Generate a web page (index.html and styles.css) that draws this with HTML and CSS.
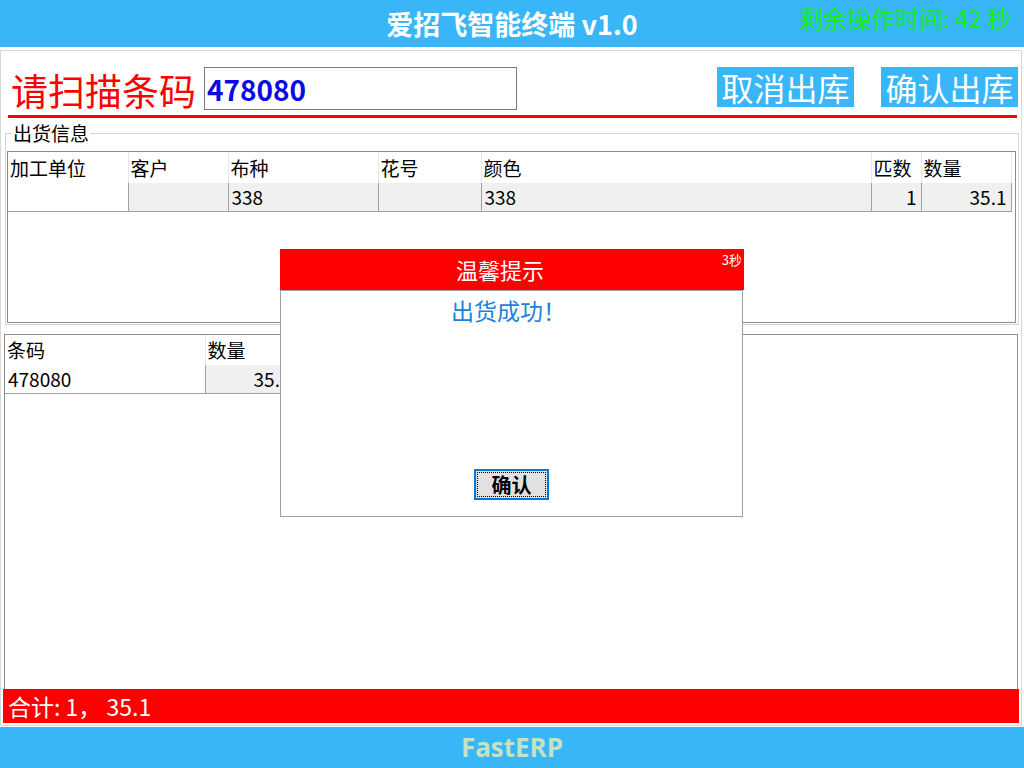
FILE: index.html
```html
<!DOCTYPE html>
<html lang="zh">
<head>
    <meta charset="UTF-8">
    <title>爱招飞智能终端 v1.0</title>
    <link rel="stylesheet" href="styles.css">
</head>
<body>
    <div class="topbar">
        <div></div>
        <div class="topbar-title">爱招飞智能终端 v1.0</div>
        <div class="topbar-timer">剩余操作时间: 42 秒</div>
    </div>

    <div class="main">
        <div class="panel">
            <div class="scan-row">
                <label class="scan-label" for="barcode">请扫描条码</label>
                <input class="scan-input" id="barcode" type="text" value="478080">
                <div class="scan-actions">
                    <button class="action-btn">取消出库</button>
                    <button class="action-btn">确认出库</button>
                </div>
            </div>
            <div class="scan-line"></div>

            <fieldset class="ship-info">
                <legend>出货信息</legend>
                <div class="grid-box grid-box-info">
                    <table class="grid">
                        <colgroup>
                            <col style="width:120px">
                            <col style="width:100px">
                            <col style="width:150px">
                            <col style="width:103px">
                            <col style="width:390px">
                            <col style="width:50px">
                            <col style="width:90px">
                        </colgroup>
                        <thead>
                            <tr>
                                <th>加工单位</th>
                                <th>客户</th>
                                <th>布种</th>
                                <th>花号</th>
                                <th>颜色</th>
                                <th>匹数</th>
                                <th>数量</th>
                            </tr>
                        </thead>
                        <tbody>
                            <tr>
                                <td class="row-head"></td>
                                <td></td>
                                <td>338</td>
                                <td></td>
                                <td>338</td>
                                <td class="num">1</td>
                                <td class="num">35.1</td>
                            </tr>
                        </tbody>
                    </table>
                </div>
            </fieldset>

            <div class="grid-box grid-box-list">
                <table class="grid">
                    <colgroup>
                        <col style="width:200px">
                        <col style="width:90px">
                    </colgroup>
                    <thead>
                        <tr>
                            <th>条码</th>
                            <th>数量</th>
                        </tr>
                    </thead>
                    <tbody>
                        <tr>
                            <td class="row-head">478080</td>
                            <td class="num">35.1</td>
                        </tr>
                    </tbody>
                </table>
            </div>

            <div class="total-bar">合计: 1， 35.1</div>
        </div>
    </div>

    <div class="footer">FastERP</div>

    <div class="dialog">
        <div class="dialog-head">
            温馨提示
            <span class="dialog-timer">3秒</span>
        </div>
        <div class="dialog-body">
            <div class="dialog-msg">出货成功！</div>
            <button class="dialog-btn">确认</button>
        </div>
    </div>
</body>
</html>
```

FILE: styles.css
```css
body {
    margin: 0;
    width: 1024px;
    height: 768px;
    overflow: hidden;
    position: relative;
    background: #fff;
    font-family: "Noto Sans CJK SC", "Noto Sans", sans-serif;
    color: #000;
}

/* 顶部标题栏 */
.topbar {
    height: 47px;
    background: #38b6f8;
    display: grid;
    grid-template-columns: 1fr auto 1fr;
    align-items: center;
}

.topbar-title {
    color: #fff;
    font-size: 27px;
    font-weight: bold;
    line-height: 30px;
}

.topbar-timer {
    justify-self: end;
    align-self: start;
    padding: 4px 13px 0 0;
    color: #12ee12;
    font-size: 24px;
    line-height: 27px;
}

.main {
    padding: 3px 0 1px;
    background: #fff;
}

.panel {
    width: 1022px;
    height: 676px;
    box-sizing: border-box;
    border: 1px solid #d8d8d8;
    display: flex;
    flex-direction: column;
}

/* 扫描行 */
.scan-row {
    display: flex;
    align-items: flex-start;
    margin-top: 16px;
    padding: 0 3px 0 10px;
}

.scan-label {
    color: #ff0000;
    font-size: 37px;
    line-height: 43px;
    padding-top: 2px;
    margin-right: 8px;
}

.scan-input {
    width: 313px;
    height: 43px;
    box-sizing: border-box;
    border: 1px solid #7a7a7a;
    padding: 0 2px;
    margin: 0;
    font-family: "Noto Sans CJK SC", "Noto Sans", sans-serif;
    font-size: 28px;
    font-weight: bold;
    color: #0a0ae8;
    outline: none;
}

.scan-actions {
    margin-left: auto;
    display: flex;
    gap: 27px;
}

.action-btn {
    width: 137px;
    height: 40px;
    padding: 0;
    border: none;
    background: #38b6f8;
    color: #fff;
    font-family: "Noto Sans CJK SC", sans-serif;
    font-size: 32px;
    line-height: 40px;
}

.scan-line {
    height: 3px;
    background: #ff0000;
    margin: 3px 4px 0 7px;
}

/* 出货信息 */
.ship-info {
    margin: 4px 2px 0 4px;
    padding: 7px 2px 1px 1px;
    border: 1px solid #d4d4d4;
    min-width: 0;
}

.ship-info legend {
    font-size: 19px;
    line-height: 22px;
    padding: 0 1px;
    margin-left: 5px;
}

.grid-box {
    border: 1px solid #8c8c8c;
    background: #fff;
}

.grid-box-info {
    height: 172px;
    box-sizing: border-box;
}

.grid-box-list {
    flex: 1;
    margin: 9px 3px 0 3px;
    border-bottom: none;
}

.grid {
    border-collapse: collapse;
    table-layout: fixed;
    font-size: 19px;
    line-height: 22px;
}

.grid th {
    height: 31px;
    padding: 0 2px;
    text-align: left;
    font-weight: normal;
    border-right: 1px solid #e6e6e6;
    overflow: hidden;
    white-space: nowrap;
}

.grid-box-list .grid th {
    height: 30px;
}

.grid td {
    height: 28px;
    padding: 0 3px;
    background: #f0f0f0;
    border-right: 1px solid #a0a0a0;
    border-bottom: 1px solid #a0a0a0;
    white-space: nowrap;
    overflow: hidden;
}

.grid td.row-head {
    background: #fff;
}

.grid td.num {
    text-align: right;
    padding-right: 4px;
}

.total-bar {
    height: 34px;
    margin: 0 2px 2px;
    padding-left: 5px;
    background: #ff0000;
    color: #fff;
    font-size: 23px;
    line-height: 34px;
}

.footer {
    height: 41px;
    background: #38b6f8;
    color: #c3e2c2;
    text-align: center;
    font-family: "Open Sans", "Noto Sans", sans-serif;
    font-size: 26px;
    font-weight: bold;
    line-height: 41px;
}

/* 提示弹窗 */
.dialog {
    position: absolute;
    left: 280px;
    top: 249px;
    width: 464px;
}

.dialog-head {
    position: relative;
    height: 41px;
    background: #ff0000;
    color: #fff;
    text-align: center;
    padding-right: 24px;
    font-size: 22px;
    line-height: 41px;
}

.dialog-timer {
    position: absolute;
    top: 4px;
    right: 2px;
    font-size: 13px;
    line-height: 14px;
}

.dialog-body {
    width: 463px;
    height: 227px;
    box-sizing: border-box;
    border: 1px solid #a0a0a0;
    background: #fff;
    display: flex;
    flex-direction: column;
    align-items: center;
}

.dialog-msg {
    padding: 7px 6px 0 0;
    color: #1a82dc;
    font-size: 23px;
    line-height: 25px;
}

.dialog-btn {
    margin: auto 0 16px;
    width: 75px;
    height: 31px;
    padding: 0;
    background: #e1e1e1;
    border: 2px solid #0078d7;
    outline: 1px dotted #000;
    outline-offset: -4px;
    font-family: "Noto Sans CJK SC", sans-serif;
    font-size: 20px;
    font-weight: bold;
    line-height: 27px;
    color: #000;
}
```
